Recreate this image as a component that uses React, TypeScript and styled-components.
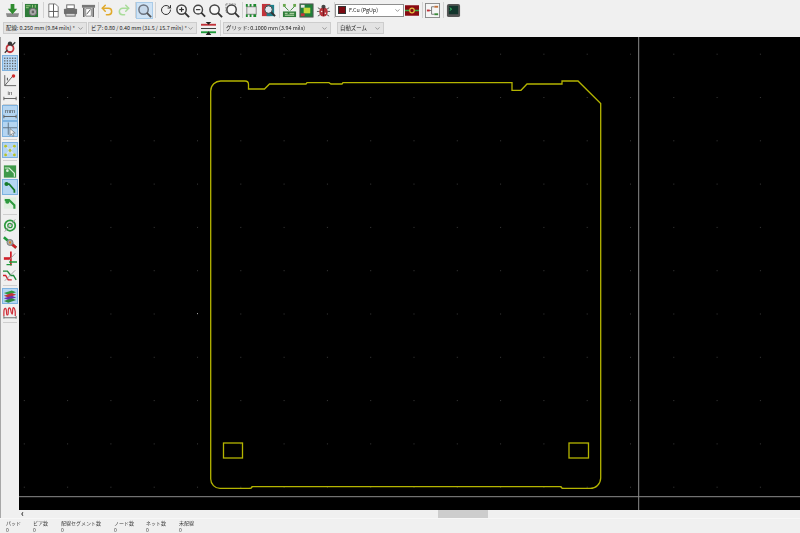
import React from "react";
import styled, { createGlobalStyle } from "styled-components";
import { ChevronDown, RotateCw, Undo2, Redo2 } from "lucide-react";

const Global = createGlobalStyle`
  html, body { margin: 0; padding: 0; background: #f0f0f0; overflow: hidden; }
  * { box-sizing: border-box; }
`;

const Window = styled.div`
  width: 800px;
  height: 533px;
  display: flex;
  flex-direction: column;
  background: #f0f0f0;
  font-family: "Noto Sans CJK JP", "Noto Sans", sans-serif;
  overflow: hidden;
`;

const TopBar = styled.div`
  height: 19px;
  display: flex;
  align-items: center;
  padding: 1px 0 0 4px;
  filter: blur(0.3px);
`;

const OptionBar = styled.div`
  height: 18px;
  display: flex;
  align-items: center;
  padding-left: 3px;
  filter: blur(0.25px);
`;

const Tool = styled.div<{ $w?: number; $active?: boolean }>`
  width: ${(p) => p.$w ?? 17}px;
  height: 17px;
  flex: none;
  display: flex;
  align-items: center;
  justify-content: center;
  background: ${(p) => (p.$active ? "#cfe3f5" : "transparent")};
  border: 1px solid ${(p) => (p.$active ? "#a9cbe8" : "transparent")};
`;

const Sep = styled.div<{ $w: number }>`
  width: ${(p) => p.$w}px;
  height: 16px;
  flex: none;
  position: relative;
  &::after {
    content: "";
    position: absolute;
    left: 50%;
    top: 0;
    bottom: 0;
    width: 1px;
    background: #d2d2d2;
  }
`;

const Combo = styled.div<{ $w: number; $gap?: number; $white?: boolean }>`
  width: ${(p) => p.$w}px;
  margin-right: ${(p) => p.$gap ?? 0}px;
  height: ${(p) => (p.$white ? 13 : 12)}px;
  flex: none;
  display: flex;
  align-items: center;
  justify-content: space-between;
  padding: 0 2px 0 2px;
  background: ${(p) => (p.$white ? "#ffffff" : "#e3e3e3")};
  border: 1px solid ${(p) => (p.$white ? "#8f8f8f" : "#cdcdcd")};
  font-size: 5.4px;
  color: #222;
  white-space: nowrap;
  overflow: hidden;
`;

const Swatch = styled.span`
  width: 8px;
  height: 8px;
  margin-right: 3px;
  background: #7c0a12;
  border: 1px solid #333;
  flex: none;
`;

const ComboLabel = styled.span`
  display: flex;
  align-items: center;
`;

const Middle = styled.div`
  height: 481px;
  display: flex;
`;

const SideBar = styled.div`
  width: 19px;
  flex: none;
  display: flex;
  flex-direction: column;
  align-items: center;
  border-left: 1px solid #a8a8a8;
  padding-top: 2px;
  filter: blur(0.3px);
`;

const SideTool = styled.div<{ $h?: number; $active?: boolean }>`
  width: 16px;
  height: ${(p) => p.$h ?? 16}px;
  flex: none;
  display: flex;
  align-items: center;
  justify-content: center;
  background: ${(p) => (p.$active ? "#b4d5f2" : "transparent")};
  border: 1px solid ${(p) => (p.$active ? "#7db2e0" : "transparent")};
`;

const SideSep = styled.div<{ $h: number }>`
  width: 14px;
  height: ${(p) => p.$h}px;
  flex: none;
  display: flex;
  align-items: center;
  &::after {
    content: "";
    width: 100%;
    height: 1px;
    background: #cfcfcf;
  }
`;

const CanvasColumn = styled.div`
  flex: 1;
  display: flex;
  flex-direction: column;
`;

const Board = styled.svg`
  display: block;
  width: 781px;
  height: 473px;
  background: #000;
`;

const ScrollBar = styled.div`
  height: 8px;
  position: relative;
  background: #f0f0f0;
  color: #222;
  font-size: 9px;
  font-weight: 700;
  line-height: 7px;
  padding-left: 2px;
`;

const Thumb = styled.div`
  position: absolute;
  left: 419px;
  top: 0;
  width: 50px;
  height: 8px;
  background: #cdcdcd;
`;

const StatusBar = styled.div`
  height: 15px;
  display: flex;
  border-top: 1px solid #f7f7f7;
  filter: blur(0.25px);
`;

const Stat = styled.div<{ $w: number }>`
  width: ${(p) => p.$w}px;
  flex: none;
  display: flex;
  flex-direction: column;
  padding-left: 6px;
  font-size: 5px;
  line-height: 7px;
  color: #3c3c3c;
`;

/* toolbar drawings */
const Ico = ({ children, s = 15 }: { children: React.ReactNode; s?: number }) => (
  <svg width={s} height={s} viewBox="0 0 16 16" fill="none">
    {children}
  </svg>
);

const ImportIcon = () => (
  <Ico>
    <path d="M1 11h14l-1 4H2z" fill="#8a8a8a" />
    <path d="M6 1h4v5h3l-5 6-5-6h3z" fill="#2e8b2e" />
  </Ico>
);
const PcbIcon = () => (
  <Ico>
    <rect x="1" y="1" width="14" height="14" fill="#2f7d3a" />
    <path d="M2 3h5M2 5h3M9 2v3M12 2v3" stroke="#a8d08a" />
    <circle cx="9.5" cy="9.5" r="4" fill="#a9a9a9" stroke="#666" />
    <circle cx="9.5" cy="9.5" r="1.4" fill="#666" />
  </Ico>
);
const PageIcon = () => (
  <Ico>
    <path d="M3 1h7l3 3v11H3z" fill="#fff" stroke="#777" />
    <path d="M8 1v14M3 9h10" stroke="#555" />
  </Ico>
);
const PrinterIcon = () => (
  <Ico>
    <rect x="4" y="2" width="8" height="4" fill="#fff" stroke="#666" />
    <rect x="1" y="6" width="14" height="6" rx="1" fill="#6f6f6f" />
    <rect x="3" y="11" width="10" height="3" fill="#d8d8d8" stroke="#666" />
  </Ico>
);
const PlotIcon = () => (
  <Ico>
    <path d="M1 2h14v3H1z" fill="#777" />
    <path d="M3 5v10M13 5v10" stroke="#555" strokeWidth="1.5" />
    <path d="M5 6h6v8H5z" fill="#fff" stroke="#888" />
    <path d="M6 12l4-5" stroke="#555" />
  </Ico>
);
const SearchBoxIcon = () => (
  <Ico>
    <circle cx="7" cy="7" r="5" fill="#c6d8ea" stroke="#6d7480" strokeWidth="1.6" />
    <path d="M10.5 10.5L15 15" stroke="#555" strokeWidth="2" />
  </Ico>
);
const ZoomIcon = ({ mark, box }: { mark?: "in" | "out"; box?: boolean }) => (
  <Ico>
    {box && <rect x="1" y="1" width="10" height="9" stroke="#888" strokeDasharray="2 1" />}
    <circle cx="7" cy="7" r="5" fill="#f7f7f7" stroke="#444" strokeWidth="1.6" />
    <path d="M10.5 10.5L15 15" stroke="#333" strokeWidth="2" />
    {mark && <path d="M4.5 7h5" stroke="#333" strokeWidth="1.3" />}
    {mark === "in" && <path d="M7 4.5v5" stroke="#333" strokeWidth="1.3" />}
  </Ico>
);
const FootprintIcon = () => (
  <Ico>
    <rect x="3" y="4" width="10" height="8" fill="#e8e8e8" stroke="#888" />
    <path d="M2 2.5h2M6 2.5h2M10 2.5h3M2 13.5h2M6 13.5h2M10 13.5h3" stroke="#1f8a2f" strokeWidth="3" />
  </Ico>
);
const LookupIcon = () => (
  <Ico>
    <rect x="1" y="1" width="9" height="13" fill="#c2333a" />
    <rect x="6" y="2" width="8" height="12" fill="#1f7f8a" />
    <circle cx="8" cy="7" r="4" fill="#dfe8f0" stroke="#444" />
    <path d="M11 10l4 4" stroke="#333" strokeWidth="2" />
  </Ico>
);
const NetlistIcon = () => (
  <Ico>
    <path d="M2 3l5 5M14 3L9 8" stroke="#3a8a3a" />
    <rect x="1" y="1" width="3" height="3" fill="#6aa84f" />
    <rect x="12" y="1" width="3" height="3" fill="#6aa84f" />
    <rect x="1" y="9" width="14" height="6" fill="#2f7d3a" />
    <path d="M3 11h3M8 11h5M3 13h10" stroke="#cfe8c0" />
  </Ico>
);
const BoardIcon = () => (
  <Ico>
    <rect x="1" y="1" width="14" height="14" fill="#1f7f3a" stroke="#555" />
    <rect x="5" y="5" width="7" height="6" fill="#c4d83a" />
    <rect x="2" y="2" width="4" height="3" fill="#e8e8e8" />
    <rect x="2" y="11" width="4" height="3" fill="#c2333a" />
  </Ico>
);
const BugIcon = () => (
  <Ico>
    <path d="M2 5l3 2M14 5l-3 2M1 9h3M15 9h-3M2 14l3-2M14 14l-3-2" stroke="#555" />
    <ellipse cx="8" cy="9.5" rx="4.5" ry="5" fill="#b5333a" />
    <circle cx="8" cy="4" r="2.2" fill="#444" />
    <path d="M8 5v9" stroke="#6d1a1f" />
    <circle cx="6" cy="9" r="0.8" fill="#eee" />
    <circle cx="10" cy="11" r="0.8" fill="#eee" />
  </Ico>
);
const LayerPairIcon = () => (
  <Ico s={15}>
    <rect x="0" y="2" width="16" height="12" fill="#8a0a12" />
    <path d="M0 8h5M11 8h5" stroke="#3fae4a" strokeWidth="1.5" />
    <circle cx="8" cy="8" r="2.6" stroke="#e0c040" strokeWidth="1.4" />
  </Ico>
);
const HierarchyIcon = () => (
  <Ico s={15}>
    <rect x="0.5" y="0.5" width="15" height="15" fill="#f6f6f6" stroke="#888" />
    <path d="M4 8h3M7 4v8M7 4h3M7 12h3" stroke="#777" />
    <rect x="2" y="7" width="3" height="2" fill="#c2333a" />
    <rect x="10" y="3" width="4" height="2" fill="#c2703a" />
    <rect x="10" y="11" width="4" height="2" fill="#3a8a3a" />
  </Ico>
);
const TerminalIcon = () => (
  <Ico s={15}>
    <rect x="1" y="1" width="14" height="14" rx="2" fill="#555" />
    <rect x="3" y="3" width="10" height="9" fill="#12352c" />
    <path d="M4 5l2 1.5L4 8" stroke="#3fd06a" />
  </Ico>
);
const RouteWidthIcon = () => (
  <Ico s={15}>
    <path d="M0 4h16" stroke="#c2333a" strokeWidth="2" />
    <path d="M0 12h16" stroke="#1f9a3a" strokeWidth="2" />
    <path d="M0 8h16" stroke="#333" />
    <path d="M5 1h6L8 4zM5 15h6L8 11z" fill="#222" />
  </Ico>
);

/* side drawings */
const DrcOffIcon = () => (
  <Ico>
    <ellipse cx="8" cy="9" rx="5" ry="5.5" fill="#c2333a" />
    <circle cx="8" cy="3.5" r="2.5" fill="#333" />
    <path d="M2 14L14 2" stroke="#333" strokeWidth="1.5" />
    <circle cx="8" cy="9" r="3" fill="#eee" />
  </Ico>
);
const GridIcon = () => (
  <Ico>
    {[2, 5, 8, 11, 14].map((y) =>
      [2, 5, 8, 11, 14].map((x) => <rect key={`${x}-${y}`} x={x - 0.7} y={y - 0.7} width="1.4" height="1.4" fill="#555" />)
    )}
  </Ico>
);
const PolarIcon = () => (
  <Ico>
    <path d="M2 15L12 3M2 15h13M2 15V3" stroke="#555" />
    <circle cx="12" cy="4" r="2" fill="#d02a2a" />
    <path d="M5 6v3" stroke="#333" />
  </Ico>
);
const UnitIcon = ({ label }: { label: string }) => (
  <svg width="15" height="14" viewBox="0 0 16 16" fill="none">
    <text x="8" y="8" textAnchor="middle" fontSize="7" fontFamily="Liberation Sans" fill="#444">
      {label}
    </text>
    <path d="M1 12h14M1 10v4M15 10v4" stroke="#555" />
  </svg>
);
const CursorIcon = () => (
  <Ico>
    <path d="M6 0v14M0 6h16" stroke="#5a6b7a" />
    <path d="M8 7l6 5h-3l1.5 3-1.5.7L9.5 13 8 15z" fill="#f2f2f2" stroke="#555" strokeWidth="0.6" />
  </Ico>
);
const RatsnestIcon = () => (
  <Ico>
    <path d="M3 3l10 10M13 3L3 13" stroke="#f2f2f2" />
    {[[3, 3], [13, 3], [3, 13], [13, 13], [8, 8]].map(([x, y]) => (
      <circle key={`${x}${y}`} cx={x} cy={y} r="1.6" fill="#b8c22a" />
    ))}
  </Ico>
);
const TrackBoxIcon = () => (
  <Ico>
    <rect x="1" y="1" width="14" height="14" fill="#3f9a4a" />
    <path d="M2 4h5l6 6v4" stroke="#d8efd8" strokeWidth="1.4" />
    <circle cx="5" cy="7" r="1.5" fill="#d8efd8" />
  </Ico>
);
const TrackIcon = () => (
  <Ico>
    <path d="M4 4h3l6 7v3" stroke="#157a2a" strokeWidth="2" />
    <circle cx="4" cy="4" r="2.4" fill="#157a2a" />
  </Ico>
);
const TrackRingIcon = () => (
  <Ico>
    <rect x="1" y="1" width="14" height="13" fill="#dff0df" />
    <path d="M2 4h5l6 6v4" stroke="#2f9a3f" strokeWidth="2.4" />
    <circle cx="5" cy="6" r="2.4" fill="#2f9a3f" />
  </Ico>
);
const ViaIcon = () => (
  <Ico>
    <circle cx="8" cy="8" r="6" stroke="#2f9a3f" strokeWidth="2" />
    <circle cx="8" cy="8" r="2.5" stroke="#2f9a3f" strokeWidth="1.5" />
    <path d="M2 15L14 1" stroke="#999" />
  </Ico>
);
const ViaCrossIcon = () => (
  <Ico>
    <path d="M1 2l14 12" stroke="#1f9a3a" strokeWidth="3" />
    <path d="M8 8l7 6" stroke="#d0202a" strokeWidth="3" />
    <circle cx="8" cy="8" r="3.4" fill="#aaa" stroke="#777" />
    <circle cx="8" cy="8" r="1.3" fill="#d88a1a" />
  </Ico>
);
const SplitIcon = () => (
  <Ico>
    <path d="M9 0v16" stroke="#d0202a" strokeWidth="2" />
    <path d="M1 8h8" stroke="#d0202a" strokeWidth="3" />
    <path d="M7 12h9M4 15h6" stroke="#1f9a3a" strokeWidth="1.6" />
    <path d="M14 2L7 10" stroke="#999" />
  </Ico>
);
const DiffPairIcon = () => (
  <Ico>
    <path d="M0 3h5l4 5h3l3 5" stroke="#1f8a3a" strokeWidth="1.6" />
    <path d="M0 8h3l3 5h4" stroke="#d0202a" strokeWidth="1.6" />
    <path d="M2 14L14 2" stroke="#999" />
  </Ico>
);
const LayersIcon = () => (
  <Ico>
    <path d="M1 4l9-3 5 2-9 3z" fill="#2f9a3f" />
    <path d="M1 7l9-3 5 2-9 3z" fill="#c2333a" />
    <path d="M1 10l9-3 5 2-9 3z" fill="#6a2fb0" />
    <path d="M1 13l9-3 5 2-9 3z" fill="#2f8a3f" />
  </Ico>
);
const WaveIcon = () => (
  <Ico>
    <path d="M1 12V8c0-6 3-6 3-1s2 5 2 0 2-6 3-1 2 5 2 0 2-5 3 1v5" stroke="#d0303a" strokeWidth="1.4" />
    <path d="M1 14h14M1 12v3M15 12v3" stroke="#666" />
  </Ico>
);

const OUTLINE =
  "M221 81 H245 Q248.5 81 248.5 84.5 V89 H264.5 L269.5 84 H306 L307 82.7 H329 L331 84 H342 L343 82.7 H512 V90.3 H521 L527 84 H562 V81 H578 L600.7 103.5 V478 A10.5 10.5 0 0 1 590 488.4 H564 Q561 488.4 561 486.7 H252 Q252 488.4 249 488.4 H220 A9.5 9.5 0 0 1 210.7 479 V91 A10 10 0 0 1 221 81 Z";

const stats = [
  { w: 27, label: "パッド" },
  { w: 28, label: "ビア数" },
  { w: 53, label: "配線セグメント数" },
  { w: 32, label: "ノード数" },
  { w: 33, label: "ネット数" },
  { w: 40, label: "未配線" },
];

const App: React.FC = () => (
  <Window>
    <Global />
    <TopBar>
      <Tool><ImportIcon /></Tool>
      <Sep $w={2} />
      <Tool><PcbIcon /></Tool>
      <Sep $w={5} />
      <Tool><PageIcon /></Tool>
      <Tool><PrinterIcon /></Tool>
      <Tool $w={18}><PlotIcon /></Tool>
      <Sep $w={1} />
      <Tool><Undo2 size={14} color="#e0a92a" strokeWidth={2.6} /></Tool>
      <Tool $w={18}><Redo2 size={14} color="#a9dc9a" strokeWidth={2.6} /></Tool>
      <Sep $w={3} />
      <Tool $active><SearchBoxIcon /></Tool>
      <Sep $w={4} />
      <Tool><RotateCw size={12} color="#333" strokeWidth={2} /></Tool>
      <Tool><ZoomIcon mark="in" /></Tool>
      <Tool $w={16}><ZoomIcon mark="out" /></Tool>
      <Tool><ZoomIcon /></Tool>
      <Tool><ZoomIcon box /></Tool>
      <Sep $w={2} />
      <Tool><FootprintIcon /></Tool>
      <Tool><LookupIcon /></Tool>
      <Sep $w={3} />
      <Tool $w={18}><NetlistIcon /></Tool>
      <Tool><BoardIcon /></Tool>
      <Tool><BugIcon /></Tool>
      <Sep $w={3} />
      <Combo $w={69} $white>
        <ComboLabel><Swatch />F.Cu (PgUp)</ComboLabel>
        <ChevronDown size={7} color="#555" />
      </Combo>
      <Tool $w={16}><LayerPairIcon /></Tool>
      <Sep $w={4} />
      <Tool $w={17}><HierarchyIcon /></Tool>
      <Sep $w={4} />
      <Tool><TerminalIcon /></Tool>
    </TopBar>
    <OptionBar>
      <Combo $w={84} $gap={1}>
        <span>配線: 0.250 mm (9.84 mils) *</span>
        <ChevronDown size={7} color="#666" />
      </Combo>
      <Combo $w={109} $gap={3}>
        <span>ビア: 0.80 / 0.40 mm (31.5 / 15.7 mils) *</span>
        <ChevronDown size={7} color="#666" />
      </Combo>
      <Tool><RouteWidthIcon /></Tool>
      <Sep $w={6} />
      <Combo $w={108} $gap={6}>
        <span>グリッド: 0.1000 mm (3.94 mils)</span>
        <ChevronDown size={7} color="#666" />
      </Combo>
      <Combo $w={47}>
        <span>自動ズーム</span>
        <ChevronDown size={7} color="#666" />
      </Combo>
    </OptionBar>
    <Middle>
      <SideBar>
        <SideTool><DrcOffIcon /></SideTool>
        <SideTool $active><GridIcon /></SideTool>
        <SideTool><PolarIcon /></SideTool>
        <SideTool><UnitIcon label="in" /></SideTool>
        <SideSep $h={2} />
        <SideTool $active><UnitIcon label="mm" /></SideTool>
        <SideTool $active><CursorIcon /></SideTool>
        <SideSep $h={5} />
        <SideTool $active><RatsnestIcon /></SideTool>
        <SideSep $h={5} />
        <SideTool><TrackBoxIcon /></SideTool>
        <SideTool $active><TrackIcon /></SideTool>
        <SideTool $h={17}><TrackRingIcon /></SideTool>
        <SideSep $h={5} />
        <SideTool $h={17}><ViaIcon /></SideTool>
        <SideTool><ViaCrossIcon /></SideTool>
        <SideTool $h={17}><SplitIcon /></SideTool>
        <SideTool><DiffPairIcon /></SideTool>
        <SideSep $h={5} />
        <SideTool $active><LayersIcon /></SideTool>
        <SideTool><WaveIcon /></SideTool>
        <SideSep $h={5} />
      </SideBar>
      <CanvasColumn>
        <Board viewBox="19 37 781 473">
          <defs>
            <pattern id="dots" x="23.8" y="10.4" width="43.3" height="43.3" patternUnits="userSpaceOnUse">
              <rect width="1" height="1" fill="#3a3a3a" />
            </pattern>
          </defs>
          <rect x="19" y="37" width="781" height="473" fill="url(#dots)" />
          <rect x="197" y="313" width="1" height="1" fill="#9a9a9a" />
          <path d={OUTLINE} fill="none" stroke="#b4b400" strokeWidth="1.3" />
          <rect x="223.5" y="443" width="19" height="15" fill="none" stroke="#b4b400" strokeWidth="1.3" />
          <rect x="569" y="443" width="19.5" height="15" fill="none" stroke="#b4b400" strokeWidth="1.3" />
          <path d="M638.7 37V510M19 496.7H800" stroke="#8c8c8c" strokeWidth="1" />
        </Board>
        <ScrollBar>
          ‹
          <Thumb />
        </ScrollBar>
      </CanvasColumn>
    </Middle>
    <StatusBar>
      {stats.map((s) => (
        <Stat key={s.label} $w={s.w}>
          <span>{s.label}</span>
          <span>0</span>
        </Stat>
      ))}
    </StatusBar>
  </Window>
);

export default App;
